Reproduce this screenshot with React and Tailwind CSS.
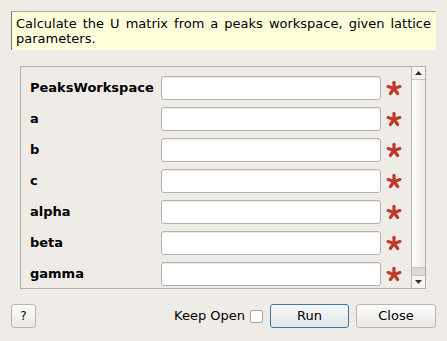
import React from "react";

const rows = ["PeaksWorkspace", "a", "b", "c", "alpha", "beta", "gamma"];

function Star() {
  const arms = [0, 72, 144, 216, 288];
  return (
    <svg width="16" height="16" viewBox="0 0 16 16">
      {arms.map((a) => {
        const r = (a - 90) * (Math.PI / 180);
        const x = 8 + Math.cos(r) * 6.2;
        const y = 8.5 + Math.sin(r) * 6.2;
        return (
          <line
            key={a}
            x1="8"
            y1="8.5"
            x2={x}
            y2={y}
            stroke="#bf3a2b"
            strokeWidth="3.2"
            strokeLinecap="round"
          />
        );
      })}
    </svg>
  );
}

export default function App() {
  return (
    <div
      className="w-[447px] h-[341px] bg-[#efebe7] text-[13px] text-black flex flex-col overflow-hidden"
      style={{ fontFamily: '"DejaVu Sans", sans-serif' }}
    >
      <div className="mt-[11px] mx-[11px] h-[39px] bg-[#ffffdc] border-l border-t border-l-[#7a7a7a] border-t-[#a9a9a9] pl-[4px] pr-[5px] pt-[4px] leading-[15px] text-justify">
        Calculate the U matrix from a peaks workspace, given lattice parameters.
      </div>

      <div className="mt-[16px] ml-[20px] w-[406px] h-[223px] border border-[#b3afab] flex">
        <div className="flex-1 flex flex-col gap-[7px] pt-[9px] pl-[9px]">
          {rows.map((r) => (
            <div key={r} className="flex items-center h-[24px]">
              <div className="w-[131px] font-bold">{r}</div>
              <div className="w-[220px] h-[24px] bg-white border border-[#b5b2ae] rounded-[3px] shadow-[inset_0_1px_0_#ececec]" />
              <div className="ml-[5px] w-[16px] h-[16px] flex items-center justify-center">
                <Star />
              </div>
            </div>
          ))}
        </div>
        <div className="w-[14px] h-full border-l border-[#bdb9b5] flex flex-col">
          <div className="h-[13px] border-b border-[#c8c4c0] bg-[#f6f5f3] flex items-center justify-center">
            <svg width="7" height="4" viewBox="0 0 7 4">
              <polygon points="0,4 7,4 3.5,0" fill="#333" />
            </svg>
          </div>
          <div className="flex-1 bg-gradient-to-r from-[#ffffff] to-[#ecebe9] border-b border-[#c8c4c0]" />
          <div className="h-[7px] bg-[#dddad6]" />
          <div className="h-[13px] border-t border-[#c8c4c0] bg-[#f6f5f3] flex items-center justify-center">
            <svg width="7" height="4" viewBox="0 0 7 4">
              <polygon points="0,0 7,0 3.5,4" fill="#333" />
            </svg>
          </div>
        </div>
      </div>

      <div className="mt-[15px] mx-[11px] flex items-center h-[24px]">
        <button className="w-[25px] h-[24px] border border-[#b8b4b0] rounded-[3px] bg-gradient-to-b from-[#fbfbfa] to-[#ebe9e6] flex items-center justify-center text-[12px]">
          ?
        </button>
        <div className="flex-1" />
        <span>Keep Open</span>
        <div className="ml-[5px] w-[13px] h-[13px] bg-white border border-[#a9a6a2] rounded-[2px]" />
        <button className="ml-[7px] w-[79px] h-[24px] border border-[#3f78a8] rounded-[3px] bg-gradient-to-b from-[#f6f7f8] to-[#e3e5e8] flex items-center justify-center">
          Run
        </button>
        <button className="ml-[7px] w-[80px] h-[24px] border border-[#b8b4b0] rounded-[3px] bg-gradient-to-b from-[#fbfbfa] to-[#ebe9e6] flex items-center justify-center">
          Close
        </button>
      </div>
    </div>
  );
}
